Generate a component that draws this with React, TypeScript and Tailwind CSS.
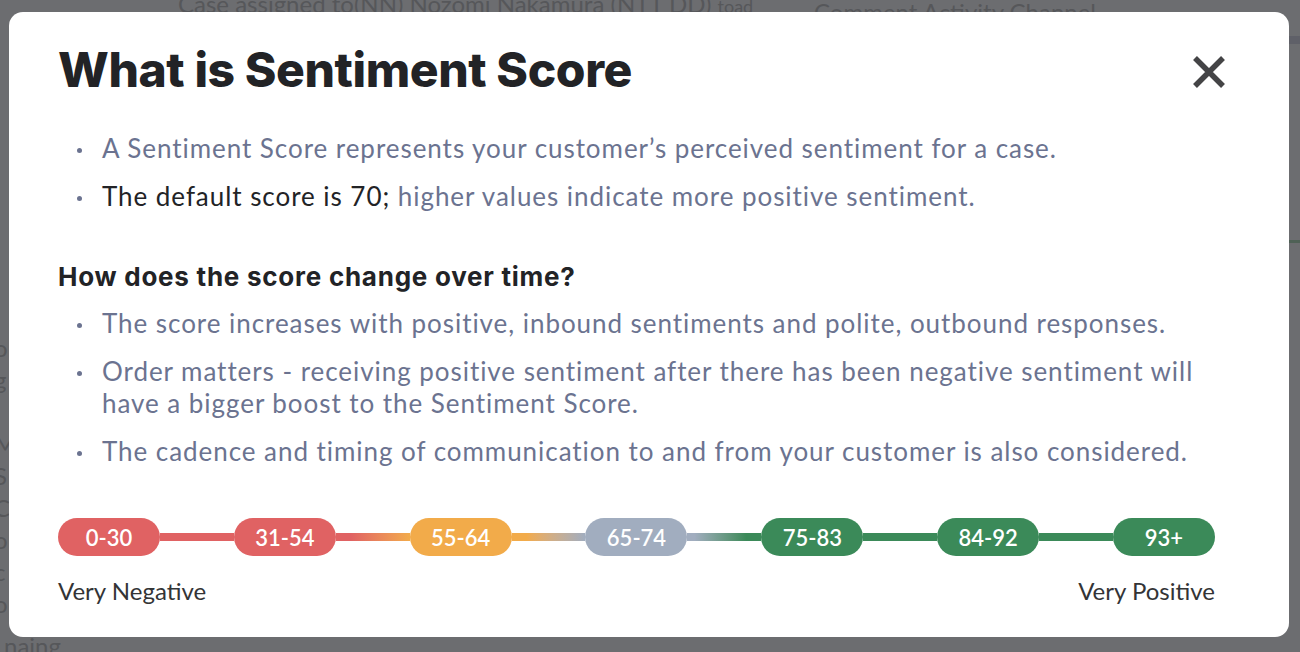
import React from 'react';

const bodyFont = { fontFamily: 'Lato, "Noto Sans", sans-serif' };
const headFont = { fontFamily: 'Inter, "Noto Sans", sans-serif' };

type Band = { label: string; color: string };

const bands: Band[] = [
  { label: '0-30', color: 'bg-[#e06263]' },
  { label: '31-54', color: 'bg-[#e06263]' },
  { label: '55-64', color: 'bg-[#f2ab4a]' },
  { label: '65-74', color: 'bg-[#a1adbf]' },
  { label: '75-83', color: 'bg-[#3b8a59]' },
  { label: '84-92', color: 'bg-[#3b8a59]' },
  { label: '93+', color: 'bg-[#3b8a59]' },
];

// connectors between pills, left to right
const links = [
  'bg-[#e06263]',
  'bg-linear-to-r from-[#e06263] from-20% to-[#f2ab4a]',
  'bg-linear-to-r from-[#f2ab4a] from-20% to-[#a1adbf]',
  'bg-linear-to-r from-[#a1adbf] from-10% to-[#3b8a59] to-80%',
  'bg-[#3b8a59]',
  'bg-[#3b8a59]',
];

const Bullet: React.FC<{ children: React.ReactNode }> = ({ children }) => (
  <li className="flex gap-[20px] leading-[32px]">
    <span className="mt-[16px] w-[5px] h-[5px] flex-none rounded-full bg-[#6b7390] ml-[19px]" />
    <span>{children}</span>
  </li>
);

export default function App() {
  return (
    <div className="relative w-[1300px] h-[652px] overflow-hidden bg-[#6c6d70]" style={bodyFont}>
      {/* dimmed page behind the modal */}
      <div className="absolute top-[-14px] left-[178px] text-[24px] text-[#56575a] whitespace-nowrap">
        Case assigned to(NN) Nozomi Nakamura (NTT DD) <span className="text-[18px]">toad</span>
      </div>
      <div className="absolute top-[-6px] left-[814px] text-[24px] text-[#56575a] whitespace-nowrap">
        Comment Activity Channel
      </div>
      <div className="absolute top-[36px] right-0 w-[12px] h-[8px] bg-[#5f6068]" />
      <div className="absolute top-[240px] right-0 w-[12px] h-[3px] bg-[#4f6156]" />
      <div className="absolute left-[-6px] top-[332px] flex flex-col text-[24px] leading-[32px] text-[#56575a]">
        <span>o</span>
        <span>g</span>
        <span>,</span>
        <span>M</span>
        <span>S</span>
        <span>C</span>
        <span>o</span>
        <span>c</span>
        <span>o</span>
      </div>
      <div className="absolute left-[4px] top-[628px] text-[24px] text-[#56575a]">naing.</div>

      {/* modal */}
      <div className="absolute left-[9px] top-[12px] w-[1280px] h-[625px] bg-white rounded-[14px] pl-[49px] pr-[74px] pt-[30px]">
        <div className="flex items-start justify-between">
          <h1 className="text-[48px] font-extrabold text-[#222326] leading-[56px] tracking-[-0.4px]" style={headFont}>
            What is Sentiment Score
          </h1>
          <button className="mt-[12px] mr-[-12px] text-[#444446]" aria-label="Close">
            <svg width="36" height="36" viewBox="0 0 36 36">
              <path d="M4 4 L32 32 M32 4 L4 32" stroke="currentColor" strokeWidth="5.5" strokeLinecap="butt" />
            </svg>
          </button>
        </div>

        <ul className="mt-[34px] flex flex-col gap-[16px] text-[26px] tracking-[0.95px] text-[#6b7390]">
          <Bullet>A Sentiment Score represents your customer’s perceived sentiment for a case.</Bullet>
          <Bullet>
            <span className="text-[#222326]">The default score is 70;</span> higher values indicate more positive sentiment.
          </Bullet>
        </ul>

        <h2 className="mt-[49px] text-[26px] font-bold text-[#222326] leading-[32px] tracking-[0.75px]" style={headFont}>
          How does the score change over time?
        </h2>

        <ul className="mt-[14px] flex flex-col gap-[16px] text-[26px] tracking-[0.95px] text-[#6b7390]">
          <Bullet>The score increases with positive, inbound sentiments and polite, outbound responses.</Bullet>
          <Bullet>
            Order matters - receiving positive sentiment after there has been negative sentiment will have a bigger boost to the Sentiment Score.
          </Bullet>
          <Bullet>The cadence and timing of communication to and from your customer is also considered.</Bullet>
        </ul>

        <div className="mt-[51px] flex items-center">
          {bands.map((b, i) => (
            <React.Fragment key={b.label}>
              <div
                className={`w-[102px] h-[38px] flex-none rounded-full ${b.color} flex items-center justify-center text-white text-[22px] font-semibold`}
              >
                {b.label}
              </div>
              {i < links.length && <div className={`flex-1 h-[8px] ${links[i]}`} />}
            </React.Fragment>
          ))}
        </div>

        <div className="mt-[17px] flex justify-between text-[24px] text-[#333436]">
          <span>Very Negative</span>
          <span>Very Positive</span>
        </div>
      </div>
    </div>
  );
}
